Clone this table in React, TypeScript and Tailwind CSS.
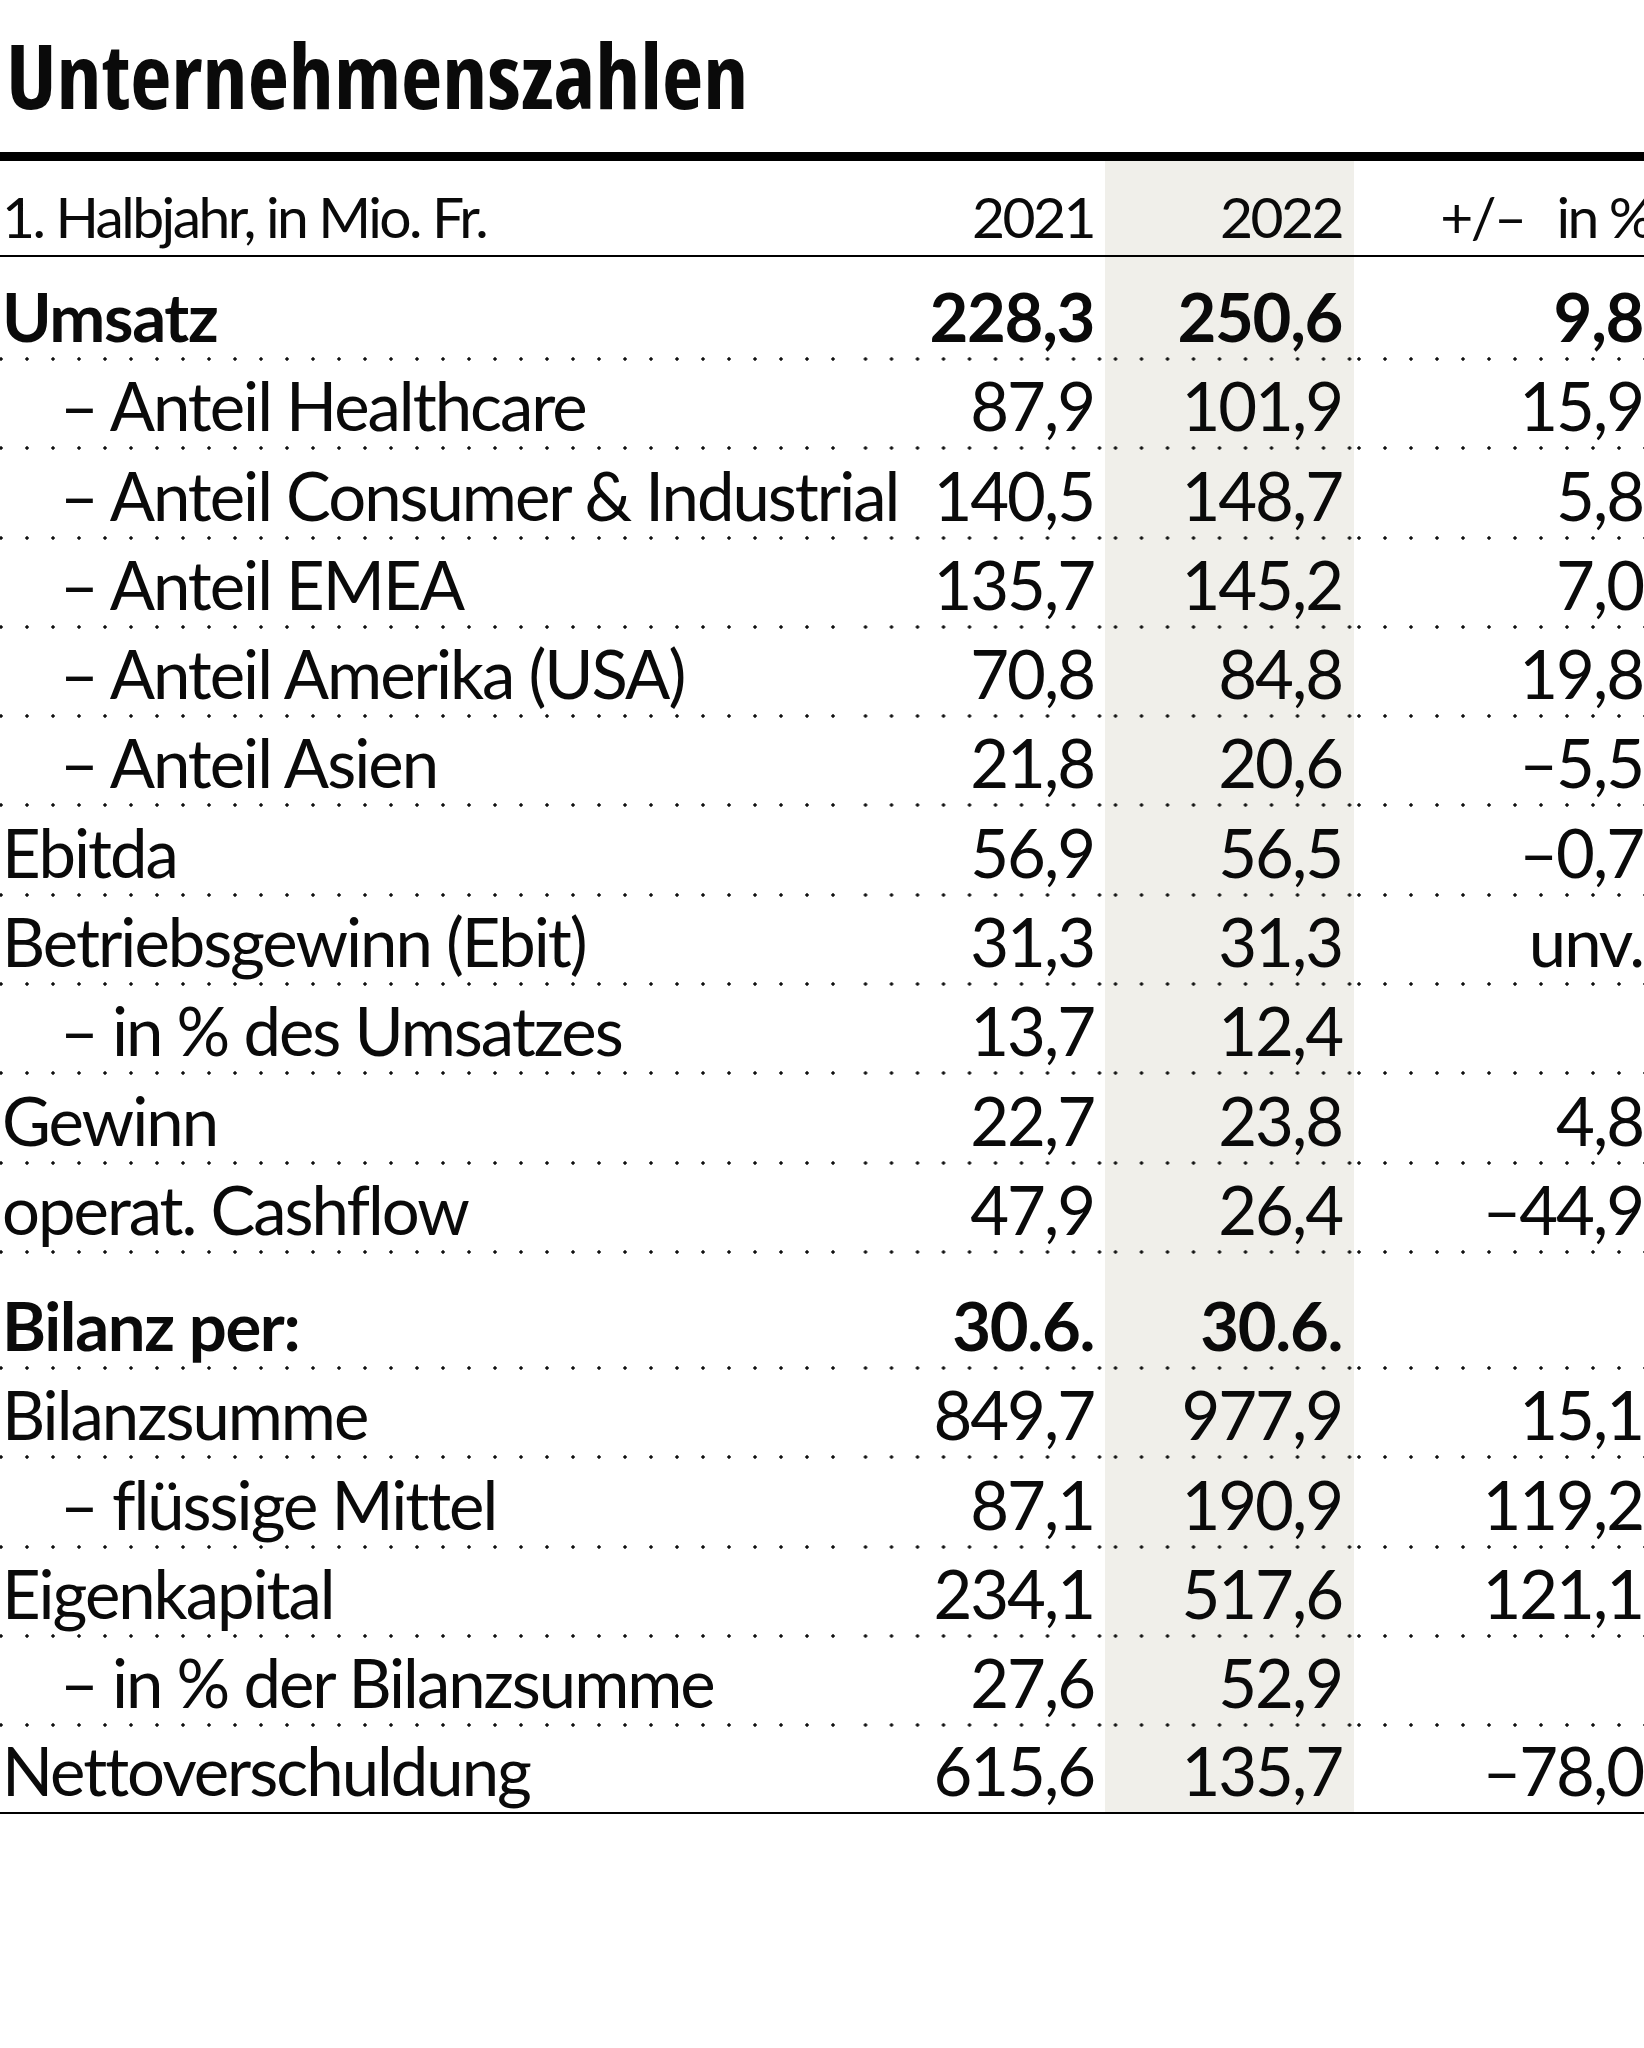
import clsx from 'clsx';

type Row = {
  label: string;
  a: string;
  b: string;
  c?: string;
  indent?: boolean;
  bold?: boolean;
};

const umsatz: Row = { label: 'Umsatz', a: '228,3', b: '250,6', c: '9,8', bold: true };

const rows: Row[] = [
  { label: 'Anteil Healthcare', a: '87,9', b: '101,9', c: '15,9', indent: true },
  { label: 'Anteil Consumer & Industrial', a: '140,5', b: '148,7', c: '5,8', indent: true },
  { label: 'Anteil EMEA', a: '135,7', b: '145,2', c: '7,0', indent: true },
  { label: 'Anteil Amerika (USA)', a: '70,8', b: '84,8', c: '19,8', indent: true },
  { label: 'Anteil Asien', a: '21,8', b: '20,6', c: '–5,5', indent: true },
  { label: 'Ebitda', a: '56,9', b: '56,5', c: '–0,7' },
  { label: 'Betriebsgewinn (Ebit)', a: '31,3', b: '31,3', c: 'unv.' },
  { label: 'in % des Umsatzes', a: '13,7', b: '12,4', indent: true },
  { label: 'Gewinn', a: '22,7', b: '23,8', c: '4,8' },
  { label: 'operat. Cashflow', a: '47,9', b: '26,4', c: '–44,9' },
];

const bilanz: Row[] = [
  { label: 'Bilanzsumme', a: '849,7', b: '977,9', c: '15,1' },
  { label: 'flüssige Mittel', a: '87,1', b: '190,9', c: '119,2', indent: true },
  { label: 'Eigenkapital', a: '234,1', b: '517,6', c: '121,1' },
  { label: 'in % der Bilanzsumme', a: '27,6', b: '52,9', indent: true },
];

// dotted rule under each cell, restarting per column like the print table
const dots =
  'bg-[radial-gradient(circle_at_3px_2px,#111_1.4px,transparent_2px)] bg-[length:26px_4px] bg-repeat-x bg-bottom';

function DataRow({ row, height, pad, dotted = true }: { row: Row; height: string; pad: string; dotted?: boolean }) {
  const text = clsx('leading-none', row.bold ? 'font-bold tracking-[-0.02em]' : 'font-normal tracking-[-0.03em]');
  return (
    <div className={clsx('grid grid-cols-[854px_251px_249px_290px]', height)}>
      <div
        className={clsx(
          'flex items-end whitespace-nowrap',
          pad,
          dotted && dots,
          row.indent ? 'pl-[60px]' : 'pl-[2px]'
        )}
      >
        <span className={text}>{row.indent ? '– ' + row.label : row.label}</span>
      </div>
      <div className={clsx('flex items-end justify-end pr-[11px]', pad, dotted && dots)}>
        <span className={text}>{row.a}</span>
      </div>
      <div className={clsx('flex items-end justify-end pr-[12px] bg-[#f0efea]', pad, dotted && dots)}>
        <span className={text}>{row.b}</span>
      </div>
      <div className={clsx('flex items-end justify-end pr-[1px]', pad, dotted && dots)}>
        <span className={text}>{row.c ?? ''}</span>
      </div>
    </div>
  );
}

export default function App() {
  return (
    <div className="w-[1644px] min-h-screen overflow-hidden bg-white text-[#0a0a0a] font-['Lato',sans-serif]">
      <div className="pt-[29px] pb-[33px] pl-[6px]">
        <h1 className="text-[90px] leading-none font-bold font-['Open_Sans',sans-serif] [font-stretch:75%]">
          Unternehmenszahlen
        </h1>
      </div>
      <div className="h-[9px] bg-black" />

      <div className="text-[57px] tracking-[-0.045em]">
        <div className="grid grid-cols-[854px_251px_249px_290px] h-[96px] border-b-2 border-black">
          <div className="flex items-end pb-[10px] pl-[2px] whitespace-nowrap">
            <span className="leading-none">1. Halbjahr, in Mio. Fr.</span>
          </div>
          <div className="flex items-end justify-end pb-[10px] pr-[11px]">
            <span className="leading-none">2021</span>
          </div>
          <div className="flex items-end justify-end pb-[10px] pr-[12px] bg-[#f0efea]">
            <span className="leading-none">2022</span>
          </div>
          <div className="flex items-end justify-end pb-[10px] whitespace-nowrap">
            <span className="leading-none mr-[-8px]">
              +/–<span className="ml-[32px]">in %</span>
            </span>
          </div>
        </div>
      </div>

      <div className="text-[67px]">
        <DataRow row={umsatz} height="h-[104px]" pad="pb-[11px]" />
        {rows.map((r) => (
          <DataRow key={r.label} row={r} height="h-[89.3px]" pad="pb-[11px]" />
        ))}
        <DataRow
          row={{ label: 'Bilanz per:', a: '30.6.', b: '30.6.', bold: true }}
          height="h-[116px]"
          pad="pb-[11px]"
        />
        {bilanz.map((r) => (
          <DataRow key={r.label} row={r} height="h-[89.3px]" pad="pb-[11px]" />
        ))}
        <div className="border-b-2 border-black">
          <DataRow
            row={{ label: 'Nettoverschuldung', a: '615,6', b: '135,7', c: '–78,0' }}
            height="h-[85px]"
            pad="pb-[8px]"
            dotted={false}
          />
        </div>
      </div>
    </div>
  );
}
